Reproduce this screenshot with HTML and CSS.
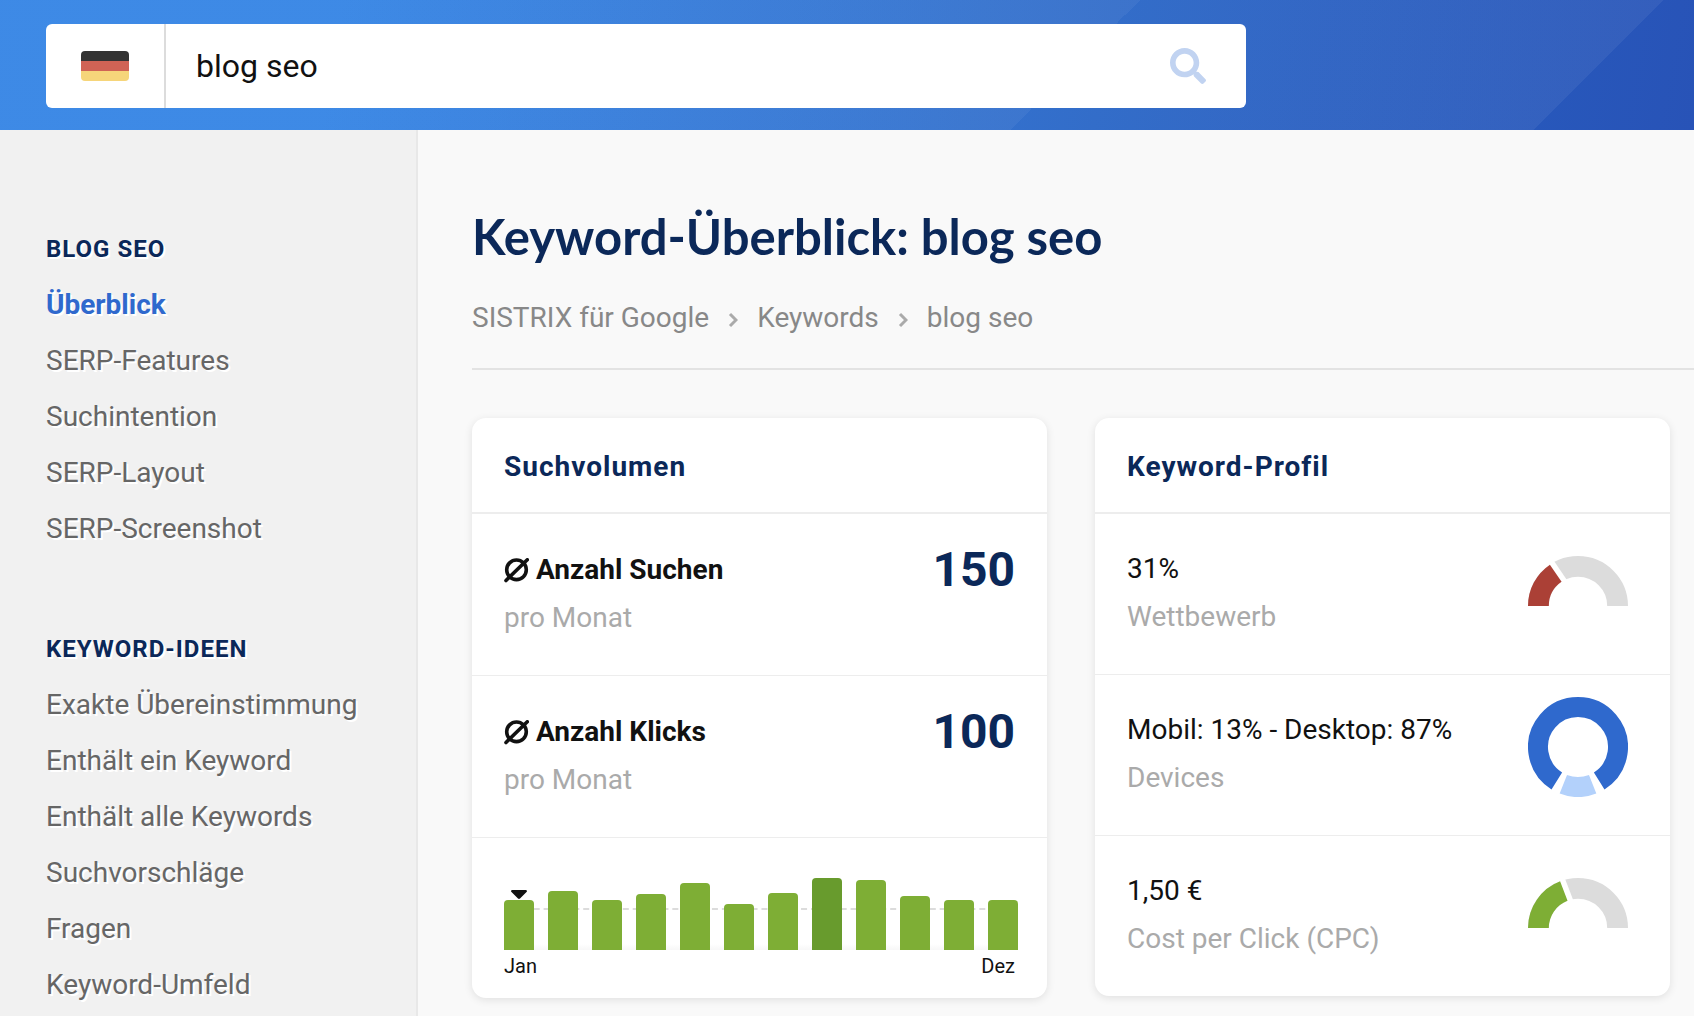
FILE: index.html
```html
<!DOCTYPE html>
<html lang="de">
<head>
<meta charset="utf-8">
<meta name="viewport" content="width=device-width, initial-scale=1">
<title>Keyword-Überblick: blog seo</title>
<link rel="stylesheet" href="styles.css">
</head>
<body>
<header class="topbar">
  <form class="search" role="search">
    <button class="search-country" type="button" aria-label="Deutschland">
      <svg class="flag" viewBox="0 0 48 30" aria-hidden="true">
        <clipPath id="flag-shape"><rect width="48" height="30" rx="4"/></clipPath>
        <g clip-path="url(#flag-shape)">
          <rect width="48" height="10" fill="#333"/>
          <rect y="10" width="48" height="10" fill="#d06355"/>
          <rect y="20" width="48" height="10" fill="#f6d57a"/>
        </g>
      </svg>
    </button>
    <input class="search-input" type="text" value="blog seo" aria-label="Suche">
    <button class="search-submit" type="submit" aria-label="Suchen">
      <svg class="search-icon" viewBox="0 0 512 512" aria-hidden="true"><path fill="#c1d3f1" d="M505 442.700 405.300 343c-4.500-4.500-10.600-7-17-7H372c27.600-35.300 44-79.700 44-128C416 93.100 322.900 0 208 0S0 93.100 0 208s93.100 208 208 208c48.300 0 92.700-16.400 128-44v16.300c0 6.400 2.500 12.500 7 17l99.700 99.700c9.400 9.400 24.600 9.400 33.900 0l28.300-28.300c9.400-9.400 9.400-24.600.1-34zM208 336c-70.700 0-128-57.200-128-128 0-70.700 57.200-128 128-128 70.700 0 128 57.200 128 128 0 70.700-57.200 128-128 128z"/></svg>
    </button>
  </form>
</header>

<div class="layout">
  <nav class="sidebar" aria-label="Keyword">
    <section class="nav-group">
      <h2 class="nav-title">BLOG SEO</h2>
      <ul class="nav-list">
        <li><a class="nav-link nav-link-active" href="#ueberblick" aria-current="page">Überblick</a></li>
        <li><a class="nav-link" href="#serp-features">SERP-Features</a></li>
        <li><a class="nav-link" href="#suchintention">Suchintention</a></li>
        <li><a class="nav-link" href="#serp-layout">SERP-Layout</a></li>
        <li><a class="nav-link" href="#serp-screenshot">SERP-Screenshot</a></li>
      </ul>
    </section>
    <section class="nav-group">
      <h2 class="nav-title">KEYWORD-IDEEN</h2>
      <ul class="nav-list">
        <li><a class="nav-link" href="#exakt">Exakte Übereinstimmung</a></li>
        <li><a class="nav-link" href="#ein-keyword">Enthält ein Keyword</a></li>
        <li><a class="nav-link" href="#alle-keywords">Enthält alle Keywords</a></li>
        <li><a class="nav-link" href="#vorschlaege">Suchvorschläge</a></li>
        <li><a class="nav-link" href="#fragen">Fragen</a></li>
        <li><a class="nav-link" href="#umfeld">Keyword-Umfeld</a></li>
      </ul>
    </section>
  </nav>

  <main class="content">
    <div class="page-head">
      <h1 class="page-title">Keyword-Überblick: blog seo</h1>
      <nav class="breadcrumb" aria-label="Brotkrumen">
        <a href="#google">SISTRIX für Google</a>
        <svg class="chevron" viewBox="0 0 10 16" aria-hidden="true"><path d="M2 2l6 6-6 6"/></svg>
        <a href="#keywords">Keywords</a>
        <svg class="chevron" viewBox="0 0 10 16" aria-hidden="true"><path d="M2 2l6 6-6 6"/></svg>
        <a href="#blog-seo">blog seo</a>
      </nav>
    </div>

    <div class="cards">
      <section class="card card-volume">
        <h2 class="card-title">Suchvolumen</h2>
        <div class="row">
          <div class="row-text">
            <p class="label label-strong"><svg class="average" viewBox="0 0 25 25" role="img" aria-label="Durchschnitt"><circle cx="12.500" cy="11.800" r="9.800"/><path d="M2 22.500 23.300 1.800"/></svg>Anzahl Suchen</p>
            <p class="note">pro Monat</p>
          </div>
          <strong class="value">150</strong>
        </div>
        <div class="row">
          <div class="row-text">
            <p class="label label-strong"><svg class="average" viewBox="0 0 25 25" role="img" aria-label="Durchschnitt"><circle cx="12.500" cy="11.800" r="9.800"/><path d="M2 22.500 23.300 1.800"/></svg>Anzahl Klicks</p>
            <p class="note">pro Monat</p>
          </div>
          <strong class="value">100</strong>
        </div>
        <div class="chart">
          <div class="bars">
            <span class="bar" style="height:50px"><svg class="marker" viewBox="0 0 16 9" aria-hidden="true"><path d="M1.500 0h13c1.300 0 1.900 1.200 1 2L9 8.500c-.6.600-1.400.600-2 0L.500 2C-.400 1.200.200 0 1.500 0z"/></svg></span>
            <span class="bar" style="height:59px"></span>
            <span class="bar" style="height:50px"></span>
            <span class="bar" style="height:56px"></span>
            <span class="bar" style="height:67px"></span>
            <span class="bar" style="height:46px"></span>
            <span class="bar" style="height:57px"></span>
            <span class="bar bar-peak" style="height:72px"></span>
            <span class="bar" style="height:70px"></span>
            <span class="bar" style="height:54px"></span>
            <span class="bar" style="height:50px"></span>
            <span class="bar" style="height:50px"></span>
          </div>
          <div class="axis"><span>Jan</span><span>Dez</span></div>
        </div>
      </section>

      <section class="card card-profile">
        <h2 class="card-title">Keyword-Profil</h2>
        <div class="row">
          <div class="row-text">
            <p class="label">31%</p>
            <p class="note">Wettbewerb</p>
          </div>
          <svg class="gauge" viewBox="0 0 100 100" aria-hidden="true">
            <path d="M10.400 70a39.600 39.600 0 0 1 79.200 0" stroke="#dcdcdc" stroke-width="20.800"/>
            <path d="M50 70 20.800 27" stroke="#fff" stroke-width="11"/>
            <path d="M10.400 70A39.600 39.600 0 0 1 27.740 37.250" stroke="#ab4036" stroke-width="20.800"/>
          </svg>
        </div>
        <div class="row">
          <div class="row-text">
            <p class="label">Mobil: 13% - Desktop: 87%</p>
            <p class="note">Devices</p>
          </div>
          <svg class="gauge" viewBox="0 0 100 100" aria-hidden="true">
            <path d="M28.800 83.920A40 40 0 1 1 71.200 83.920" stroke="#2f69cd" stroke-width="20"/>
            <path d="M35.340 87.220A40 40 0 0 0 64.660 87.220" stroke="#b3d1fb" stroke-width="20"/>
          </svg>
        </div>
        <div class="row">
          <div class="row-text">
            <p class="label">1,50 €</p>
            <p class="note">Cost per Click (CPC)</p>
          </div>
          <svg class="gauge" viewBox="0 0 100 100" aria-hidden="true">
            <path d="M10.400 70a39.600 39.600 0 0 1 79.200 0" stroke="#dcdcdc" stroke-width="20.800"/>
            <path d="M50 70 31.400 21.500" stroke="#fff" stroke-width="11"/>
            <path d="M10.400 70A39.600 39.600 0 0 1 35.810 33.030" stroke="#7eae35" stroke-width="20.800"/>
          </svg>
        </div>
      </section>
    </div>
  </main>
</div>
</body>
</html>
```
FILE: styles.css
```css
* { box-sizing: border-box; }

body {
  margin: 0;
  min-height: 100vh;
  display: flex;
  flex-direction: column;
  font-family: Roboto, "Liberation Sans", sans-serif;
  font-size: 28px;
  color: #111;
  background: #f9f9f9;
}

h1, h2, p, ul { margin: 0; padding: 0; }
ul { list-style: none; }
a { color: inherit; text-decoration: none; }
svg { display: block; flex: none; }

/* Top bar */
.topbar {
  padding: 24px 46px 22px;
  background:
    linear-gradient(135deg, rgba(255, 255, 255, .05) 62.5%, transparent 62.5%),
    linear-gradient(135deg, rgba(255, 255, 255, .06) 91.2%, transparent 91.2%),
    linear-gradient(100deg, #277ce3 20%, #2664c6 65%, #2853b7 100%);
}

.search {
  display: flex;
  max-width: 1200px;
  height: 84px;
  background: #fff;
  border-radius: 6px;
  overflow: hidden;
}

.search-country,
.search-submit {
  display: flex;
  align-items: center;
  justify-content: center;
  padding: 0;
  border: 0;
  background: none;
}

.search-country { width: 120px; border-right: 2px solid #dcdcdc; }
.flag { width: 48px; height: 30px; }

.search-input {
  flex: 1;
  min-width: 0;
  padding: 0 30px;
  border: 0;
  outline: 0;
  background: none;
  font: inherit;
  font-size: 32px;
  color: #111;
}

.search-submit { width: 116px; }
.search-icon { width: 36px; height: 36px; }

/* Page columns */
.layout { display: flex; flex: 1; }

.sidebar {
  flex: none;
  width: 418px;
  padding: 91px 20px 0 46px;
  border-right: 2px solid #e8e8e8;
  background: #f1f1f1;
  line-height: 56px;
  text-shadow: 2px 2px 0 #fff;
}

.nav-group + .nav-group { margin-top: 64px; }
.nav-title { font-size: 24px; font-weight: 700; letter-spacing: 1px; color: #0b2859; }
.nav-link { display: block; color: #666; }
.nav-link-active { font-weight: 700; color: #2f69cd; }

.content { flex: 1; min-width: 0; padding: 76px 0 16px 54px; }

.page-head { padding-bottom: 30px; border-bottom: 2px solid #e3e3e3; }

.page-title {
  font-family: Lato, "Open Sans", sans-serif;
  font-size: 49px;
  font-weight: 700;
  line-height: 60px;
  color: #0b2859;
}

.breadcrumb {
  display: flex;
  align-items: center;
  gap: 19px;
  margin-top: 32px;
  line-height: 40px;
  color: #888;
}

.chevron { width: 10px; height: 16px; margin-top: 4px; fill: none; stroke: #aaa; stroke-width: 3; }

/* Cards */
.cards {
  display: grid;
  grid-template-columns: repeat(2, minmax(0, 1fr));
  align-items: start;
  gap: 48px;
  margin-top: 48px;
  padding-right: 24px;
}

.card {
  background: #fff;
  border-radius: 14px;
  box-shadow: 0 2px 8px rgba(0, 0, 0, .1);
}

.card-title {
  padding: 23px 32px 19px;
  border-bottom: 2px solid #ededed;
  font-size: 28px;
  font-weight: 700;
  letter-spacing: 1px;
  line-height: 52px;
  color: #0b2859;
}

.row {
  display: flex;
  justify-content: space-between;
  align-items: flex-start;
  padding: 22px 32px 33px;
  line-height: 48px;
}

.row + .row, .row + .chart { border-top: 1px solid #ededed; }
.card-profile .row { padding-right: 42px; }
.card-profile .row-text { padding-top: 9px; }
.card-volume .row-text { padding-top: 10px; }

.label { display: flex; align-items: center; gap: 7px; }
.label-strong { font-weight: 700; }
.note { color: #aaa; }
.average { width: 25px; height: 25px; fill: none; stroke: #111; stroke-width: 3.6; stroke-linecap: round; }
.value { font-size: 48px; line-height: 68px; color: #0b2859; }
.gauge { width: 100px; height: 100px; fill: none; }

/* Monthly chart */
.chart { padding: 40px 32px 20px; }

.bars {
  position: relative;
  display: flex;
  align-items: flex-end;
  gap: 14px;
  height: 72px;
  background: linear-gradient(transparent 66px, #f7f7f7);
}

/* Average line behind the bars */
.bars::before {
  content: "";
  position: absolute;
  inset: 30px 0 auto;
  border-top: 2px dashed #dcdcdc;
}

.bar {
  position: relative;
  flex: 1;
  min-width: 30px;
  border-radius: 4px 4px 0 0;
  background: #7eae35;
}

.bar-peak { background: #689b2d; }

.marker {
  position: absolute;
  bottom: calc(100% + 1px);
  left: 50%;
  width: 16px;
  height: 9px;
  margin-left: -8px;
  fill: #111;
}

.axis {
  display: flex;
  justify-content: space-between;
  margin-top: 4px;
  font-size: 20px;
  line-height: 24px;
}
```
